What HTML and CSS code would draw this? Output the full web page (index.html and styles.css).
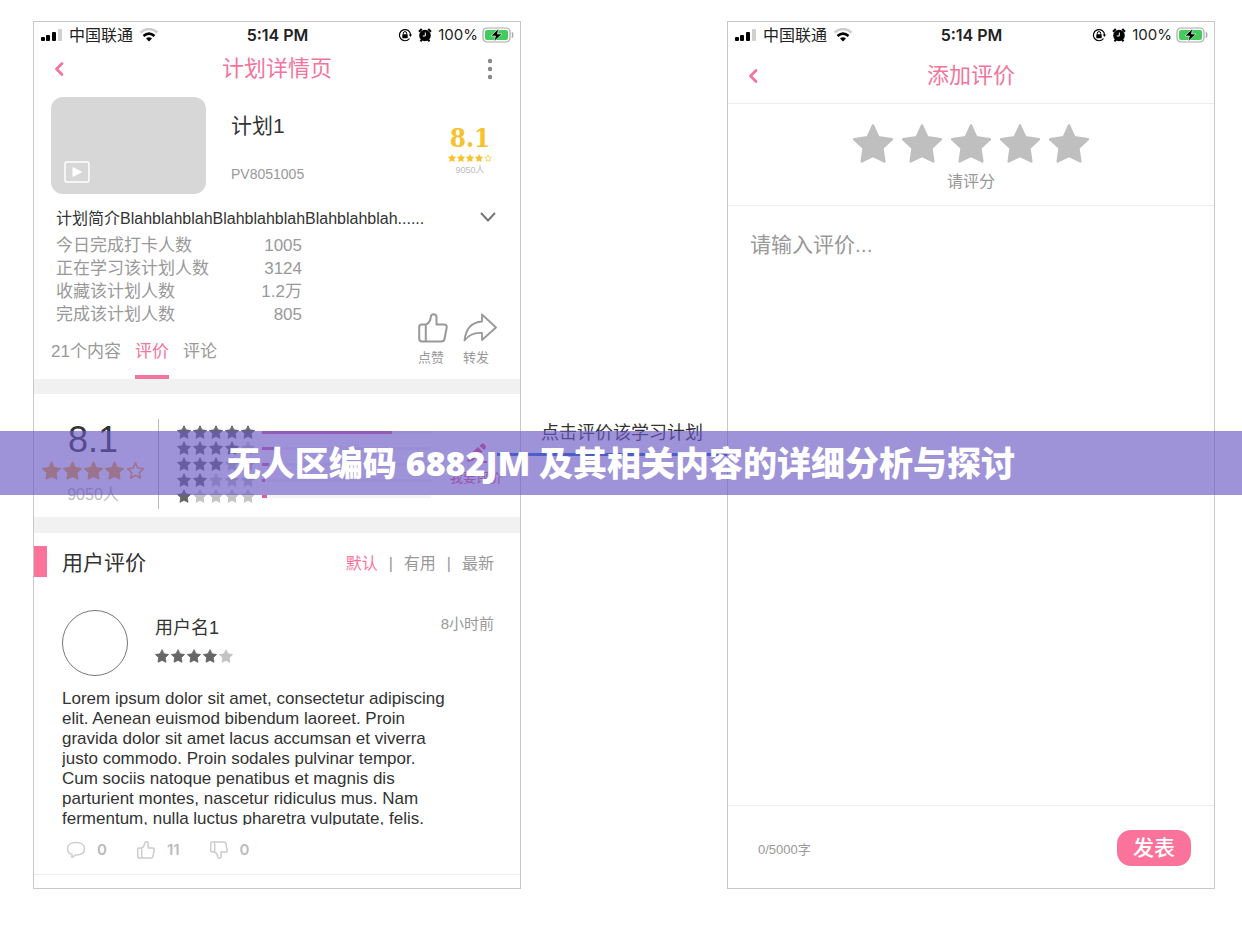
FILE: index.html
```html
<!DOCTYPE html>
<html lang="zh-CN">

<head>
    <meta charset="UTF-8">
    <meta name="viewport" content="width=device-width, initial-scale=1.0">
    <title>计划详情页</title>
    <link rel="stylesheet" href="styles.css">
</head>

<body>
    <!-- Shared icons -->
    <svg class="sprite" aria-hidden="true">
        <symbol id="star" viewBox="0 0 24 24">
            <path d="M12 1.2 15.2 8.2 23.3 9.5 17.6 14.7 18.8 22.8 12 19.4 5.2 22.8 6.4 14.7 .7 9.5 8.8 8.2Z" stroke-width="1.500" stroke-linejoin="round" />
        </symbol>
        <symbol id="star-line" viewBox="0 0 24 24">
            <path d="M12 2.4 14.9 8.8 22 9.8 16.8 14.6 18 21.6 12 18.2 6 21.6 7.2 14.6 2 9.8 9.1 8.8Z" fill="none" stroke-width="2" stroke-linejoin="round" />
        </symbol>
        <symbol id="signal" viewBox="0 0 22 14">
            <rect x="0" y="9" width="4" height="4" rx="1" />
            <rect x="5" y="7" width="4" height="6" rx="1" />
            <rect x="11" y="4" width="4" height="9" rx="1" />
            <rect x="17" y="1" width="4" height="12" rx="1" fill="#d0d0d0" />
        </symbol>
        <symbol id="wifi" viewBox="0 0 20 14">
            <path d="M1.5 4.5Q10-2.5 18.500 4.500" fill="none" stroke="#ccc" stroke-width="2.400" />
            <path d="M4.500 8Q10 3.200 15.500 8" fill="none" stroke="#000" stroke-width="2.600" />
            <path d="M7 10.500Q10 8.200 13 10.500L10 13.500Z" />
        </symbol>
        <symbol id="lock" viewBox="0 0 14 14">
            <path d="M11.500 10.500A5.600 5.600 0 1 1 12.600 7" fill="none" stroke="#000" stroke-width="1.200" />
            <path d="M10.800 6.500H14L12.400 9Z" />
            <rect x="4.300" y="6.200" width="5.400" height="4" rx=".6" />
            <path d="M5.300 6.500V5.300a1.700 1.700 0 0 1 3.400 0V6.500" fill="none" stroke="#000" />
        </symbol>
        <symbol id="alarm" viewBox="0 0 14 14">
            <circle cx="7" cy="7.500" r="5.800" />
            <path d="M1 3.800 3.800 1M13 3.800 10.200 1M2.500 13.300 4 11.500M11.500 13.300 10 11.500" stroke="#000" stroke-width="2" />
            <path d="M7.300 4.500V8H4.800" fill="none" stroke="#fff" />
        </symbol>
        <symbol id="battery" viewBox="0 0 32 16">
            <rect x="1" y="1" width="27" height="14" rx="4" fill="#fff" stroke="#aaa" stroke-width="1.200" />
            <rect x="3" y="3" width="23" height="10" rx="2" fill="#41cc5c" />
            <path d="M30 5.500q1.500 2.500 0 5" fill="none" stroke="#aaa" stroke-width="1.500" />
            <path d="M16.500 1.500 9 9H13.500L12 14.500 20 7H15.500Z" stroke="#fff" stroke-width=".6" />
        </symbol>
        <symbol id="back" viewBox="0 0 12 16">
            <path d="M9 2.500 3.500 8 9 13.500" fill="none" stroke="#f1759c" stroke-width="2.800" stroke-linecap="round" stroke-linejoin="round" />
        </symbol>
        <symbol id="like" viewBox="0 0 30 30">
            <path d="M8 11.500H3.500Q1.200 11.500 1.200 14V25.500Q1.200 28.500 4 28.500H23.500Q26 28.500 26.500 26L28.700 14.500Q29 11.500 26 11.500H18.500V4.500Q18.500 1.200 15.500 1.200Q13 1.200 12.800 3.800Q12.300 9.500 8 11.500ZM7.800 11.500V28.500" fill="none" stroke-linejoin="round" />
        </symbol>
        <symbol id="comment" viewBox="0 0 20 18">
            <path d="M10 1.500C4.500 1.500 1.500 4.300 1.500 7.700C1.500 10.300 3.300 12.500 6 13.400V16.500L9.500 14C15.500 14 18.500 11.300 18.500 7.700C18.500 4.300 15.500 1.500 10 1.500Z" fill="none" stroke-linejoin="round" />
        </symbol>
    </svg>

    <main class="board">
        <!-- Plan detail -->
        <section class="phone">
            <div class="status">
                <div class="status-left">
                    <svg class="i-signal"><use href="#signal" /></svg>
                    <span>中国联通</span>
                    <svg class="i-wifi"><use href="#wifi" /></svg>
                </div>
                <b>5:14 PM</b>
                <div class="status-right">
                    <svg class="i-small"><use href="#lock" /></svg>
                    <svg class="i-small"><use href="#alarm" /></svg>
                    <span>100%</span>
                    <svg class="i-battery"><use href="#battery" /></svg>
                </div>
            </div>
            <header class="nav">
                <button class="icon-btn" aria-label="返回"><svg class="i-back"><use href="#back" /></svg></button>
                <h1>计划详情页</h1>
                <button class="icon-btn more" aria-label="更多">
                    <svg class="i-more" viewBox="0 0 6 22"><circle cx="3" cy="3" r="2.200" /><circle cx="3" cy="11" r="2.200" /><circle cx="3" cy="19" r="2.200" /></svg>
                </button>
            </header>

            <div class="plan">
                <div class="cover">
                    <svg class="i-play" viewBox="0 0 26 22"><rect x="1" y="1" width="24" height="20" rx="2" fill="none" stroke="#fff" stroke-width="1.500" /><path d="M9 6.500 17.500 11 9 15.500Z" fill="#fff" stroke="#fff" stroke-linejoin="round" /></svg>
                </div>
                <div class="plan-info">
                    <h2>计划1</h2>
                    <p>PV8051005</p>
                </div>
                <div class="plan-score">
                    <strong>8.1</strong>
                    <div class="stars gold tiny">
                        <svg><use href="#star" /></svg><svg><use href="#star" /></svg><svg><use href="#star" /></svg><svg><use href="#star" /></svg><svg><use href="#star-line" /></svg>
                    </div>
                    <small>9050人</small>
                </div>
            </div>

            <div class="intro">
                <p>计划简介BlahblahblahBlahblahblahBlahblahblah......</p>
                <button class="icon-btn" aria-label="展开"><svg class="i-down" viewBox="0 0 16 10"><path d="M1 1 8 8.500 15 1" fill="none" stroke="#777" stroke-width="2" /></svg></button>
            </div>

            <div class="summary">
                <div>
                    <dl class="stats">
                        <dt>今日完成打卡人数</dt><dd>1005</dd>
                        <dt>正在学习该计划人数</dt><dd>3124</dd>
                        <dt>收藏该计划人数</dt><dd>1.2万</dd>
                        <dt>完成该计划人数</dt><dd>805</dd>
                    </dl>
                    <nav class="tabs">
                        <a href="#">21个内容</a>
                        <a href="#" class="active">评价</a>
                        <a href="#">评论</a>
                    </nav>
                </div>
                <div class="actions">
                    <button><svg class="i-action" stroke="#999" stroke-width="2"><use href="#like" /></svg>点赞</button>
                    <button><svg class="i-action share" viewBox="0 0 34 30"><path d="M19 1.500 33 14.500 19 27V20Q8 19 1.500 27.500Q3.500 9.500 19 8.500Z" fill="none" stroke="#999" stroke-width="1.800" stroke-linejoin="round" /></svg>转发</button>
                </div>
            </div>

            <div class="rating">
                <div class="total">
                    <strong>8.1</strong>
                    <div class="stars orange">
                        <svg><use href="#star" /></svg><svg><use href="#star" /></svg><svg><use href="#star" /></svg><svg><use href="#star" /></svg><svg><use href="#star-line" /></svg>
                    </div>
                    <small>9050人</small>
                </div>
                <div class="levels">
                    <div class="level">
                        <div class="stars dark"><svg><use href="#star" /></svg><svg><use href="#star" /></svg><svg><use href="#star" /></svg><svg><use href="#star" /></svg><svg><use href="#star" /></svg></div>
                        <div class="bar"><i style="width: 77%"></i></div>
                    </div>
                    <div class="level">
                        <div class="stars dark"><svg><use href="#star" /></svg><svg><use href="#star" /></svg><svg><use href="#star" /></svg><svg><use href="#star" /></svg><svg class="off"><use href="#star" /></svg></div>
                        <div class="bar"><i style="width: 10%"></i></div>
                    </div>
                    <div class="level">
                        <div class="stars dark"><svg><use href="#star" /></svg><svg><use href="#star" /></svg><svg><use href="#star" /></svg><svg class="off"><use href="#star" /></svg><svg class="off"><use href="#star" /></svg></div>
                        <div class="bar"><i style="width: 4%"></i></div>
                    </div>
                    <div class="level">
                        <div class="stars dark"><svg><use href="#star" /></svg><svg><use href="#star" /></svg><svg class="off"><use href="#star" /></svg><svg class="off"><use href="#star" /></svg><svg class="off"><use href="#star" /></svg></div>
                        <div class="bar"><i style="width: 2%"></i></div>
                    </div>
                    <div class="level">
                        <div class="stars dark"><svg><use href="#star" /></svg><svg class="off"><use href="#star" /></svg><svg class="off"><use href="#star" /></svg><svg class="off"><use href="#star" /></svg><svg class="off"><use href="#star" /></svg></div>
                        <div class="bar"><i style="width: 3%"></i></div>
                    </div>
                </div>
                <button class="write">
                    <svg viewBox="0 0 24 22"><path d="M3 19 5 12.500 14 4 18.500 8.500 9 17.500ZM15.500 2.800 17.500 1Q19 0 20.500 1.500L21.500 2.500Q22.500 4 21.500 5.500L20 7ZM13 18H23V20H13Z" fill="#e94b84" /></svg>
                    我要评价
                </button>
            </div>

            <div class="reviews-head">
                <h2>用户评价</h2>
                <div class="sort">
                    <button class="active">默认</button><span>|</span><button>有用</button><span>|</span><button>最新</button>
                </div>
            </div>

            <article class="review">
                <div class="author">
                    <div class="avatar"></div>
                    <div class="author-info">
                        <h3>用户名1</h3>
                        <div class="stars dark"><svg><use href="#star" /></svg><svg><use href="#star" /></svg><svg><use href="#star" /></svg><svg><use href="#star" /></svg><svg class="off"><use href="#star" /></svg></div>
                    </div>
                    <time>8小时前</time>
                </div>
                <p class="review-text">Lorem ipsum dolor sit amet, consectetur adipiscing elit. Aenean euismod bibendum laoreet. Proin gravida dolor sit amet lacus accumsan et viverra justo commodo. Proin sodales pulvinar tempor. Cum sociis natoque penatibus et magnis dis parturient montes, nascetur ridiculus mus. Nam fermentum, nulla luctus pharetra vulputate, felis.</p>
                <div class="feedback">
                    <button aria-label="回复"><svg stroke="#ccc" stroke-width="1.500"><use href="#comment" /></svg>0</button>
                    <button aria-label="赞"><svg stroke="#ccc" stroke-width="2.500"><use href="#like" /></svg>11</button>
                    <button aria-label="踩"><svg class="flip" stroke="#ccc" stroke-width="2.500"><use href="#like" /></svg>0</button>
                </div>
            </article>
        </section>

        <!-- Link between the two screens -->
        <div class="flow">
            <p>点击评价该学习计划</p>
            <div class="flow-line"></div>
        </div>

        <!-- Add review -->
        <section class="phone">
            <div class="status">
                <div class="status-left">
                    <svg class="i-signal"><use href="#signal" /></svg>
                    <span>中国联通</span>
                    <svg class="i-wifi"><use href="#wifi" /></svg>
                </div>
                <b>5:14 PM</b>
                <div class="status-right">
                    <svg class="i-small"><use href="#lock" /></svg>
                    <svg class="i-small"><use href="#alarm" /></svg>
                    <span>100%</span>
                    <svg class="i-battery"><use href="#battery" /></svg>
                </div>
            </div>
            <header class="nav nav-tall">
                <button class="icon-btn" aria-label="返回"><svg class="i-back"><use href="#back" /></svg></button>
                <h1>添加评价</h1>
            </header>
            <div class="rate">
                <div class="rate-stars">
                    <button aria-label="1星"><svg><use href="#star" /></svg></button>
                    <button aria-label="2星"><svg><use href="#star" /></svg></button>
                    <button aria-label="3星"><svg><use href="#star" /></svg></button>
                    <button aria-label="4星"><svg><use href="#star" /></svg></button>
                    <button aria-label="5星"><svg><use href="#star" /></svg></button>
                </div>
                <p>请评分</p>
            </div>
            <textarea class="editor" aria-label="评价" placeholder="请输入评价..."></textarea>
            <footer class="submit">
                <span>0/5000字</span>
                <button>发表</button>
            </footer>
        </section>
    </main>

    <div class="banner">无人区编码 6882JM 及其相关内容的详细分析与探讨</div>
</body>

</html>
```

FILE: styles.css
```css
/* General styling */
* {
    box-sizing: border-box;
}

body {
    position: relative;
    margin: 0;
    background-color: #fff;
    color: #333;
    font-family: "Liberation Sans", "Noto Sans CJK SC", sans-serif;
    font-size: 17px;
}

h1, h2, h3, p, dl, dd {
    margin: 0;
    font-weight: normal;
}

button {
    padding: 0;
    border: none;
    background: none;
    color: #999;
    font-family: inherit;
    cursor: pointer;
}

svg {
    display: block;
    flex: none;
}

.sprite {
    position: absolute;
    width: 0;
    height: 0;
}

.board {
    display: grid;
    grid-template-columns: 488fr 206fr 488fr;
    padding: 21px 27px 37px 33px;
}

.phone {
    display: flex;
    flex-direction: column;
    min-width: 0;
    border: 1px solid #c8c8c8;
}

/* Status bar */
.status {
    display: grid;
    grid-template-columns: 1fr auto 1fr;
    align-items: center;
    height: 26px;
    padding: 0 6px 0 7px;
    color: #222;
    font-family: Inter, "Noto Sans CJK SC", sans-serif;
    font-size: 15px;
    line-height: 26px;
}

.status b {
    font-size: 16px;
    font-weight: 600;
}

.status-left,
.status-right {
    display: flex;
    align-items: center;
    gap: 6px;
}

.status-left {
    font-size: 16px;
}

.status-right {
    justify-content: flex-end;
    gap: 4px;
}

.i-signal { width: 22px; height: 14px; }
.i-wifi { width: 20px; height: 14px; }
.i-small { width: 14px; height: 14px; margin-right: 2px; }
.i-battery { width: 32px; height: 16px; }

/* Title bar */
.nav {
    display: grid;
    grid-template-columns: 1fr auto 1fr;
    align-items: center;
    height: 40px;
    padding: 2px 19px 0;
}

.nav-tall {
    height: 56px;
    padding-top: 0;
    border-bottom: 1px solid #eee;
}

.nav h1 {
    color: #f1759c;
    font-size: 22px;
    line-height: 32px;
}

.i-back { width: 12px; height: 16px; }
.i-more { width: 6px; height: 22px; fill: #888; }

.more {
    justify-self: end;
    margin-right: 8px;
}

/* Plan */
.plan {
    display: flex;
    height: 106px;
    padding: 9px 28px 0 17px;
}

.cover {
    display: flex;
    align-items: flex-end;
    width: 155px;
    height: 97px;
    padding: 0 13px 11px;
    border-radius: 12px;
    background-color: #d7d7d7;
}

.i-play { width: 26px; height: 22px; }

.plan-info {
    flex: 1;
    padding: 14px 0 0 25px;
}

.plan-info h2 {
    font-size: 21px;
    line-height: 30px;
}

.plan-info p {
    margin-top: 23px;
    color: #999;
    font-size: 14px;
    line-height: 20px;
}

.plan-score {
    display: flex;
    flex-direction: column;
    align-items: center;
    padding-top: 26px;
    color: #f6c22d;
}

.plan-score strong {
    font-family: "DejaVu Serif Condensed", "DejaVu Serif", serif;
    font-size: 26px;
    line-height: 31px;
}

.plan-score small {
    margin-top: 1px;
    color: #bbb;
    font-size: 9px;
    line-height: 14px;
}

/* Stars */
.stars {
    display: flex;
    gap: 2px;
}

.stars svg {
    width: 14px;
    height: 14px;
    fill: currentColor;
    stroke: currentColor;
}

.gold { color: #f6c22d; }
.orange { color: #f5a623; }
.dark { color: #666; }
.stars .off { color: #c4c4c4; }

.tiny {
    gap: 1px;
}

.tiny svg {
    width: 8px;
    height: 8px;
}

.intro {
    display: flex;
    align-items: center;
    justify-content: space-between;
    height: 38px;
    padding: 7px 24px 0 22px;
    font-size: 16px;
}

.i-down { width: 16px; height: 10px; }

.summary {
    display: flex;
    justify-content: space-between;
    padding-right: 23px;
    border-bottom: 15px solid #f1f1f1;
}

.stats {
    display: grid;
    grid-template-columns: 168px 78px;
    padding: 2px 0 0 22px;
    color: #999;
    line-height: 23px;
}

.stats dd {
    text-align: right;
}

.tabs {
    display: flex;
    gap: 14px;
    height: 53px;
    padding: 12px 0 0 17px;
}

.tabs a {
    height: 41px;
    color: #999;
    line-height: 28px;
    text-decoration: none;
}

.tabs .active {
    border-bottom: 4px solid #f1759c;
    color: #f1759c;
}

.actions {
    display: flex;
    align-items: flex-end;
    gap: 15px;
    padding-bottom: 11px;
}

.actions button {
    display: flex;
    flex-direction: column;
    align-items: flex-start;
    gap: 5px;
    font-size: 13px;
    line-height: 20px;
}

.i-action { width: 30px; height: 30px; }
.share { width: 34px; }

/* Rating */
.rating {
    display: flex;
    height: 139px;
    padding: 25px 18px 8px 10px;
    border-bottom: 16px solid #f1f1f1;
}

.total {
    display: flex;
    flex-direction: column;
    align-items: center;
    width: 115px;
    height: 90px;
    padding-right: 16px;
    border-right: 1px solid #bbb;
}

.total strong {
    font-size: 36px;
    font-weight: normal;
    line-height: 42px;
}

.total .stars svg {
    width: 19px;
    height: 19px;
}

.total small {
    margin-top: 4px;
    color: #bbb;
    font-size: 16px;
    line-height: 22px;
}

.levels {
    display: flex;
    flex: 1;
    flex-direction: column;
    gap: 2px;
    padding: 6px 19px 0 18px;
}

.level {
    display: flex;
    align-items: center;
    gap: 7px;
}

.bar {
    flex: 1;
    height: 3px;
    background-color: #f4f4f4;
}

.bar i {
    display: block;
    height: 3px;
    background-color: #e0609a;
}

.write {
    display: flex;
    flex-direction: column;
    align-items: center;
    gap: 3px;
    padding-top: 24px;
    color: #e94b84;
    font-size: 13px;
    line-height: 20px;
}

.write svg {
    width: 24px;
    height: 22px;
}

/* Reviews */
.reviews-head {
    display: flex;
    align-items: center;
    justify-content: space-between;
    height: 31px;
    margin-top: 13px;
    padding: 2px 26px 0 15px;
    border-left: 13px solid #fb739b;
}

.reviews-head h2 {
    font-size: 21px;
    line-height: 31px;
}

.sort {
    display: flex;
    gap: 11px;
    padding-top: 2px;
    color: #999;
    font-size: 16px;
    line-height: 24px;
}

.sort button {
    font-size: 16px;
    line-height: 24px;
}

.sort .active {
    color: #fb739b;
}

.review {
    margin-top: 33px;
    margin-bottom: 13px;
    padding: 0 26px 14px 28px;
    border-bottom: 1px solid #eee;
}

.author {
    display: flex;
}

.avatar {
    width: 66px;
    height: 66px;
    border: 1px solid #777;
    border-radius: 50%;
}

.author-info {
    flex: 1;
    padding: 5px 0 0 27px;
}

.author-info h3 {
    margin-bottom: 8px;
    font-size: 18px;
    line-height: 26px;
}

.author time {
    padding-top: 3px;
    color: #999;
    font-size: 15px;
    line-height: 22px;
}

.review-text {
    max-width: 390px;
    height: 136px;
    margin-top: 13px;
    overflow: hidden;
    line-height: 20px;
}

.feedback {
    display: flex;
    gap: 29px;
    margin-top: 15px;
    padding-left: 4px;
}

.feedback button {
    display: flex;
    align-items: center;
    gap: 11px;
    color: #bbb;
    font-family: Inter, sans-serif;
    font-size: 15px;
    font-weight: 600;
    line-height: 20px;
}

.feedback svg {
    width: 20px;
    height: 18px;
}

.flip {
    transform: scaleY(-1);
}

/* Flow arrow */
.flow {
    padding-top: 399px;
    font-size: 18px;
    line-height: 26px;
    text-align: center;
}

.flow p {
    padding-right: 4px;
}

.flow-line {
    height: 3px;
    margin: 7px 0 0 -24px;
    background-color: #1668c8;
}

/* Add review */
.rate {
    padding: 19px 0 11px;
    border-bottom: 1px solid #eee;
    color: #999;
    font-size: 16px;
    line-height: 24px;
    text-align: center;
}

.rate-stars {
    display: flex;
    justify-content: center;
    gap: 9px;
    margin-bottom: 6px;
}

.rate-stars svg {
    width: 40px;
    height: 41px;
    fill: #bfbfbf;
    stroke: #bfbfbf;
}

.editor {
    display: block;
    flex: 1;
    width: 100%;
    padding: 24px 22px;
    border: none;
    outline: none;
    background: none;
    font-family: inherit;
    font-size: 21px;
    line-height: 30px;
    resize: none;
}

.editor::placeholder {
    color: #999;
}

.submit {
    display: flex;
    align-items: center;
    justify-content: space-between;
    height: 83px;
    padding: 2px 23px 0 30px;
    border-top: 1px solid #eee;
    color: #999;
    font-size: 13px;
}

.submit button {
    width: 74px;
    height: 36px;
    border-radius: 14px;
    background-color: #fb739b;
    color: #fff;
    font-size: 21px;
    font-weight: 500;
    line-height: 36px;
}

/* Title strip across the page */
.banner {
    position: absolute;
    top: 431px;
    left: 0;
    width: 100%;
    padding: 7px 0;
    background-color: rgba(106, 88, 197, 0.65);
    color: #fff;
    font-family: "Noto Sans", "Noto Sans CJK SC", sans-serif;
    font-size: 34px;
    font-weight: 900;
    line-height: 50px;
    text-align: center;
}
```
